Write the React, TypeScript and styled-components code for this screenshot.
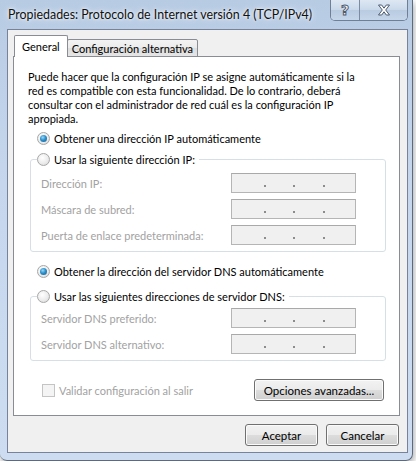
import styled, { createGlobalStyle } from 'styled-components';

const GlobalStyle = createGlobalStyle`
  body {
    margin: 0;
    background: #fff;
    font-family: Lato, "Liberation Sans", sans-serif;
    font-size: 11px;
    color: #000;
  }
`;

const Window = styled.div`
  width: 413px;
  height: 461px;
  box-sizing: border-box;
  display: flex;
  flex-direction: column;
  background: linear-gradient(180deg, #b7cbe3 0%, #c6d7ed 40%, #cddcf1 100%);
  border-right: 1px solid #5b6a80;
  border-bottom: 1px solid #5b6a80;
  border-radius: 0 0 7px 7px;
  box-shadow: 1px 3px 7px rgba(0, 0, 0, 0.35);
`;

const TitleBar = styled.div`
  display: flex;
  align-items: flex-start;
  height: 29px;
  padding-left: 8px;
  flex-shrink: 0;
`;

const Title = styled.div`
  line-height: 30px;
  font-size: 12.4px;
  color: #111;
  text-shadow: 0 0 6px rgba(255, 255, 255, 0.9), 0 0 3px rgba(255, 255, 255, 0.9);
  white-space: nowrap;
`;

const CaptionGroup = styled.div`
  display: flex;
  margin-left: auto;
  margin-right: 4px;
  height: 20px;
  border: 1px solid #6f7f96;
  border-top: none;
  border-radius: 0 0 5px 5px;
  overflow: hidden;
  box-shadow: inset 0 0 0 1px rgba(255, 255, 255, 0.55);
`;

const CaptionButton = styled.div<{ $w: number }>`
  width: ${(p) => p.$w}px;
  display: flex;
  align-items: center;
  justify-content: center;
  background: linear-gradient(180deg, #dde7f3 0%, #c9d8ea 50%, #b9cbe1 51%, #c5d6ea 100%);
  & + & {
    border-left: 1px solid #7b8ba2;
  }
`;

const HelpGlyph = styled.span`
  font-family: "DejaVu Sans", sans-serif;
  font-weight: bold;
  font-size: 14px;
  line-height: 1;
  color: #fff;
  -webkit-text-stroke: 1px #4d5b70;
`;

const ClientArea = styled.div`
  flex: 1;
  margin: 0 4px 7px 7px;
  border: 1px solid #76839a;
  background: #f0f0f0;
  display: flex;
  flex-direction: column;
  padding: 5px 7px 6px 5px;
`;

const TabStrip = styled.div`
  display: flex;
  align-items: flex-end;
  height: 22px;
  margin-bottom: -1px;
  position: relative;
  z-index: 1;
`;

const Tab = styled.div<{ $active?: boolean }>`
  box-sizing: border-box;
  height: ${(p) => (p.$active ? 22 : 18)}px;
  padding: 0 ${(p) => (p.$active ? 7 : 4)}px;
  margin-left: ${(p) => (p.$active ? 1 : -1)}px;
  display: flex;
  align-items: center;
  border: 1px solid #898c95;
  border-bottom: ${(p) => (p.$active ? 'none' : '1px solid #898c95')};
  border-radius: 2px 2px 0 0;
  background: ${(p) => (p.$active ? '#fff' : 'linear-gradient(180deg, #f3f3f3 0%, #ebebeb 50%, #dedede 51%, #e5e5e5 100%)')};
  padding-top: ${(p) => (p.$active ? 0 : 1)}px;
  white-space: nowrap;
`;

const Panel = styled.div`
  box-sizing: border-box;
  height: 360px;
  border: 1px solid #898c95;
  background: #fff;
  padding: 13px 0 0 14px;
  display: flex;
  flex-direction: column;
`;

const Intro = styled.p`
  margin: 0;
  line-height: 14px;
  white-space: nowrap;
`;

const RadioRow = styled.label<{ $top: number }>`
  display: flex;
  align-items: center;
  gap: 4px;
  height: 18px;
  margin: ${(p) => p.$top}px 0 0 9px;
  white-space: nowrap;
`;

const Radio = styled.span<{ $checked?: boolean }>`
  box-sizing: border-box;
  width: 13px;
  height: 13px;
  border-radius: 50%;
  border: 1px solid #a7a7a7;
  background: radial-gradient(circle at 40% 35%, #ffffff 0%, #ececec 55%, #d4d4d4 100%);
  display: flex;
  align-items: center;
  justify-content: center;
  flex-shrink: 0;
  &::after {
    content: '';
    display: ${(p) => (p.$checked ? 'block' : 'none')};
    width: 7px;
    height: 7px;
    border-radius: 50%;
    background: radial-gradient(circle at 40% 35%, #9ad8f7 0%, #2b8fcb 45%, #155d8c 100%);
  }
`;

const Group = styled.fieldset<{ $top: number }>`
  box-sizing: border-box;
  width: 356px;
  margin: ${(p) => p.$top}px 0 0 2px;
  padding: 0 29px 6px 10px;
  border: 1px solid #d5dfe5;
  border-radius: 3px;
  min-inline-size: 0;
`;

const Legend = styled.legend`
  padding: 0 4px 0 0;
  margin-left: -4px;
  & > label {
    margin: 0;
  }
`;

const Fields = styled.div<{ $top: number }>`
  display: grid;
  grid-template-columns: 1fr 125px;
  row-gap: 6px;
  align-items: center;
  margin-top: ${(p) => p.$top}px;
  white-space: nowrap;
`;

const FieldLabel = styled.span`
  color: #a2a2a2;
`;

const IpBox = styled.div`
  box-sizing: border-box;
  height: 20px;
  border: 1px solid #b5b5b5;
  border-top-color: #a9a9a9;
  background: #f0f0f0;
  display: grid;
  grid-template-columns: 34px 29px 30px 1fr;
`;

const IpDot = styled.span`
  display: flex;
  justify-content: flex-end;
  align-items: flex-end;
  padding-bottom: 5px;
  &::after {
    content: '';
    width: 2px;
    height: 2px;
    background: #8c8c8c;
  }
`;

const Footer = styled.div`
  display: flex;
  align-items: center;
  margin: 18px 15px 0 14px;
`;

const CheckRow = styled.label`
  display: flex;
  align-items: center;
  gap: 4px;
  color: #a2a2a2;
  white-space: nowrap;
`;

const CheckBox = styled.span`
  box-sizing: border-box;
  width: 13px;
  height: 13px;
  border: 1px solid #c4c4c4;
  background: #f4f4f4;
`;

const Button = styled.button<{ $w: number }>`
  box-sizing: border-box;
  width: ${(p) => p.$w}px;
  height: 22px;
  padding: 0;
  border: 1px solid #707070;
  border-radius: 3px;
  background: linear-gradient(180deg, #f2f2f2 0%, #ebebeb 49%, #dddddd 50%, #cfcfcf 100%);
  box-shadow: inset 0 0 0 1px #fbfbfb;
  font-family: inherit;
  font-size: 11.5px;
  color: #000;
`;

const PushRight = styled.div`
  margin-left: auto;
`;

const ButtonBar = styled.div`
  display: flex;
  justify-content: flex-end;
  gap: 8px;
  margin: 8px 1px 0 0;
`;

function IpField() {
  return (
    <IpBox>
      <IpDot />
      <IpDot />
      <IpDot />
    </IpBox>
  );
}

function CloseGlyph() {
  return (
    <svg width="14" height="12" viewBox="0 0 14 12">
      <path
        d="M1.5 1h3.2L7 4.2 9.3 1h3.2L8.7 6l3.8 5H9.3L7 7.8 4.7 11H1.5l3.8-5z"
        fill="#fff"
        stroke="#4d5b70"
        strokeWidth="1"
        strokeLinejoin="round"
      />
    </svg>
  );
}

export default function App() {
  return (
    <>
      <GlobalStyle />
      <Window>
        <TitleBar>
          <Title>Propiedades: Protocolo de Internet versión 4 (TCP/IPv4)</Title>
          <CaptionGroup>
            <CaptionButton $w={28}>
              <HelpGlyph>?</HelpGlyph>
            </CaptionButton>
            <CaptionButton $w={47}>
              <CloseGlyph />
            </CaptionButton>
          </CaptionGroup>
        </TitleBar>

        <ClientArea>
          <TabStrip>
            <Tab $active>General</Tab>
            <Tab>Configuración alternativa</Tab>
          </TabStrip>

          <Panel>
            <Intro>
              Puede hacer que la configuración IP se asigne automáticamente si la
              <br />
              red es compatible con esta funcionalidad. De lo contrario, deberá
              <br />
              consultar con el administrador de red cuál es la configuración IP
              <br />
              apropiada.
            </Intro>

            <RadioRow $top={3}>
              <Radio $checked />
              Obtener una dirección IP automáticamente
            </RadioRow>

            <Group $top={3}>
              <Legend>
                <RadioRow $top={0}>
                  <Radio />
                  Usar la siguiente dirección IP:
                </RadioRow>
              </Legend>
              <Fields $top={5}>
                <FieldLabel>Dirección IP:</FieldLabel>
                <IpField />
                <FieldLabel>Máscara de subred:</FieldLabel>
                <IpField />
                <FieldLabel>Puerta de enlace predeterminada:</FieldLabel>
                <IpField />
              </Fields>
            </Group>

            <RadioRow $top={10}>
              <Radio $checked />
              Obtener la dirección del servidor DNS automáticamente
            </RadioRow>

            <Group $top={7}>
              <Legend>
                <RadioRow $top={0}>
                  <Radio />
                  Usar las siguientes direcciones de servidor DNS:
                </RadioRow>
              </Legend>
              <Fields $top={3}>
                <FieldLabel>Servidor DNS preferido:</FieldLabel>
                <IpField />
                <FieldLabel>Servidor DNS alternativo:</FieldLabel>
                <IpField />
              </Fields>
            </Group>

            <Footer>
              <CheckRow>
                <CheckBox />
                Validar configuración al salir
              </CheckRow>
              <PushRight>
                <Button $w={130}>Opciones avanzadas...</Button>
              </PushRight>
            </Footer>
          </Panel>

          <ButtonBar>
            <Button $w={73}>Aceptar</Button>
            <Button $w={73}>Cancelar</Button>
          </ButtonBar>
        </ClientArea>
      </Window>
    </>
  );
}
